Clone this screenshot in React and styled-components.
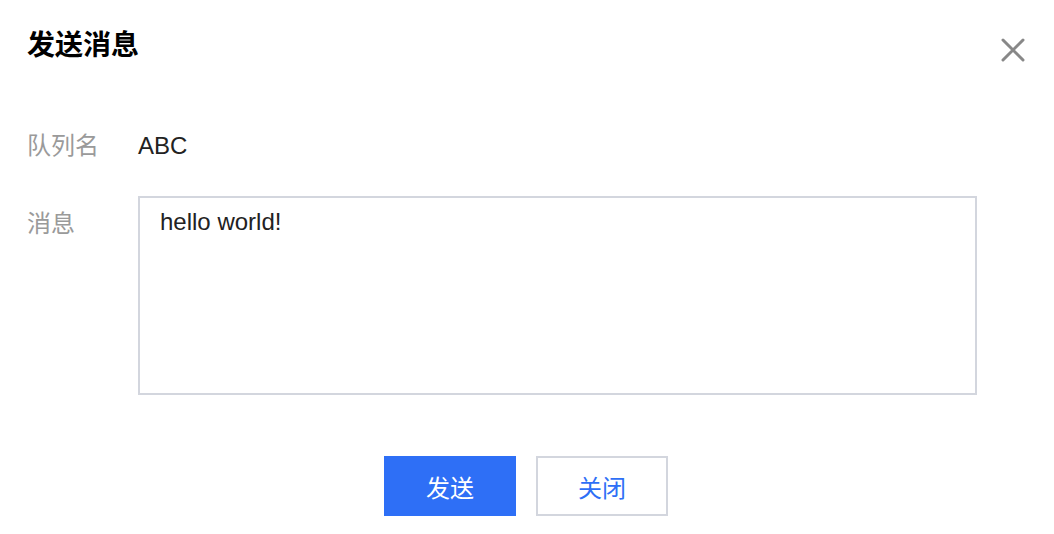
import React from "react";
import styled, { createGlobalStyle } from "styled-components";

const GlobalStyle = createGlobalStyle`
  html, body {
    margin: 0;
    padding: 0;
    background: #fff;
  }
  body {
    font-family: "Liberation Sans", "Noto Sans CJK SC", sans-serif;
    color: #222;
  }
`;

const Dialog = styled.div`
  width: 1054px;
  height: 534px;
  box-sizing: border-box;
  padding: 26px 27px 0 27px;
  display: flex;
  flex-direction: column;
`;

const Header = styled.div`
  display: flex;
  justify-content: space-between;
  align-items: flex-start;
  height: 40px;
`;

const Title = styled.h1`
  margin: 0;
  font-size: 28px;
  line-height: 40px;
  font-weight: 700;
  color: #000;
`;

const CloseButton = styled.button`
  border: 0;
  background: none;
  padding: 0;
  width: 26px;
  height: 26px;
  margin-top: 11px;
  margin-right: 1px;
  cursor: pointer;
  display: flex;
  align-items: center;
  justify-content: center;
`;

const Form = styled.div`
  display: flex;
  flex-direction: column;
  gap: 30px;
  margin-top: 60px;
  padding-right: 50px;
`;

const Row = styled.div`
  display: flex;
  align-items: flex-start;
`;

const Label = styled.div`
  width: 111px;
  flex-shrink: 0;
  font-size: 24px;
  line-height: 40px;
  color: #9a9a9a;
  margin-top: ${(p) => p.$offset || 0}px;
`;

const Value = styled.div`
  font-size: 24px;
  line-height: 40px;
  color: #222;
`;

const TextArea = styled.textarea`
  width: 839px;
  height: 199px;
  box-sizing: border-box;
  border: 2px solid #d3d6de;
  border-radius: 0;
  padding: 6px 20px;
  margin: 0;
  font-family: "Liberation Sans", "Noto Sans CJK SC", sans-serif;
  font-size: 24px;
  line-height: 36px;
  color: #222;
  resize: none;
  outline: none;
`;

const Footer = styled.div`
  display: flex;
  justify-content: center;
  gap: 20px;
  margin-top: 61px;
  margin-left: -27px;
  margin-right: -27px;
  padding-right: 2px;
`;

const Button = styled.button`
  width: 132px;
  height: 60px;
  box-sizing: border-box;
  font-family: "Noto Sans CJK SC", sans-serif;
  font-size: 24px;
  border-radius: 0;
  cursor: pointer;
  border: 2px solid ${(p) => (p.$primary ? "#2e6ff6" : "#d3d6de")};
  background: ${(p) => (p.$primary ? "#2e6ff6" : "#fff")};
  color: ${(p) => (p.$primary ? "#fff" : "#2e6ff6")};
`;

export default function App() {
  return (
    <>
      <GlobalStyle />
      <Dialog>
        <Header>
          <Title>发送消息</Title>
          <CloseButton aria-label="关闭">
            <svg width="24" height="24" viewBox="0 0 24 24">
              <path
                d="M2 2 L22 22 M22 2 L2 22"
                stroke="#888"
                strokeWidth="3"
                strokeLinecap="round"
              />
            </svg>
          </CloseButton>
        </Header>
        <Form>
          <Row>
            <Label>队列名</Label>
            <Value>ABC</Value>
          </Row>
          <Row>
            <Label $offset={8}>消息</Label>
            <TextArea defaultValue="hello world!" />
          </Row>
        </Form>
        <Footer>
          <Button $primary>发送</Button>
          <Button>关闭</Button>
        </Footer>
      </Dialog>
    </>
  );
}
